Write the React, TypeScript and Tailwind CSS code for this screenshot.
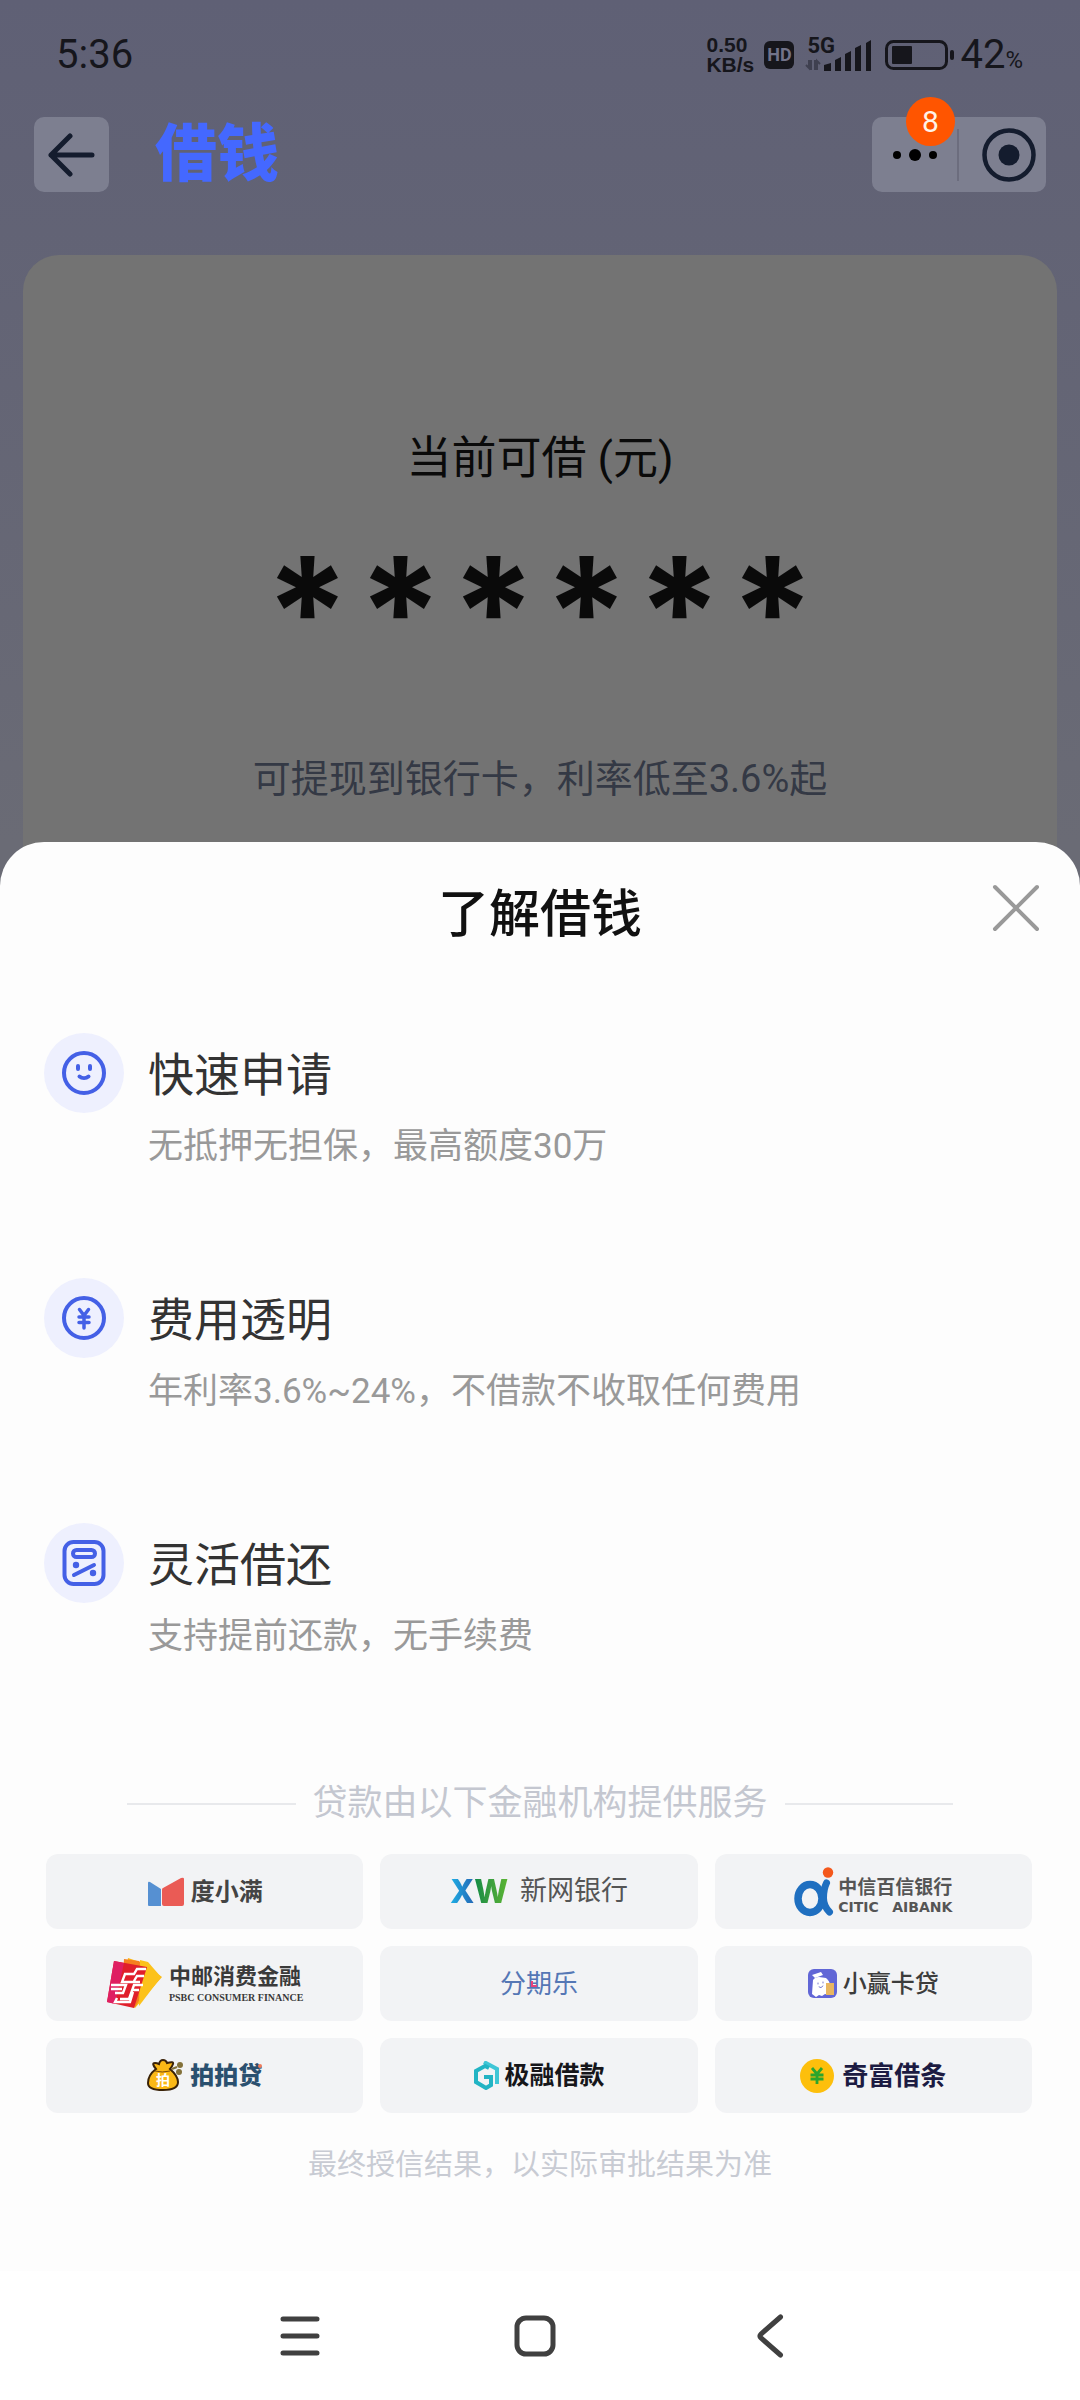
import React from 'react';
import clsx from 'clsx';

interface Feature {
    title: string;
    description: string;
    icon: React.ReactNode;
}

function SmileIcon() {
    return (
        <svg width="48" height="48" viewBox="0 0 48 48" fill="none" stroke="#4460e6" strokeLinecap="round">
            <circle cx="24" cy="24" r="20" strokeWidth="4" />
            <path d="M18 17v3M30 17v3" strokeWidth="4" />
            <path d="M19.5 27.5c2.500 2 6.500 2 9 0" strokeWidth="4" />
        </svg>
    );
}

function YuanIcon() {
    return (
        <svg width="48" height="48" viewBox="0 0 48 48" fill="none" stroke="#4460e6" strokeLinecap="round">
            <circle cx="24" cy="24" r="20" strokeWidth="4" />
            <path d="M19.500 15.500l4.500 6 4.500-6M24 22v12M19 23h10M19 28.500h10" strokeWidth="3.500" strokeLinejoin="round" />
        </svg>
    );
}

function BillIcon() {
    return (
        <svg width="48" height="48" viewBox="0 0 48 48" fill="none" stroke="#4460e6" strokeLinecap="round">
            <rect x="4.500" y="3" width="39" height="42" rx="9" strokeWidth="4" />
            <rect x="13" y="11" width="22" height="7" rx="3.500" strokeWidth="4" />
            <path d="M14 36l20-10" strokeWidth="4" />
            <circle cx="16" cy="26" r="3.200" fill="#4460e6" stroke="none" />
            <circle cx="33" cy="34" r="3.200" fill="#4460e6" stroke="none" />
        </svg>
    );
}

const features: Feature[] = [
    { title: '快速申请', description: '无抵押无担保，最高额度30万', icon: <SmileIcon /> },
    { title: '费用透明', description: '年利率3.6%~24%，不借款不收取任何费用', icon: <YuanIcon /> },
    { title: '灵活借还', description: '支持提前还款，无手续费', icon: <BillIcon /> },
];

function StatusBar() {
    return (
        <div className="flex h-[109px] items-center justify-between pr-[57px] pl-14 text-[#16161c]">
            <span className="text-[40px] leading-none">5:36</span>

            <div className="flex items-center">
                <div className="flex w-[58px] flex-col font-['Liberation_Sans'] text-[21px] leading-[20px] font-bold">
                    <span>0.50</span>
                    <span>KB/s</span>
                </div>
                <span className="flex h-7 w-[30px] items-center justify-center rounded-md bg-[#16161c] text-lg font-bold text-[#72738a]">
                    HD
                </span>
                <div className="relative ml-2.5 h-9 w-[68px]">
                    <span className="absolute top-0 left-[3px] text-[22px] leading-[18px] font-bold">5G</span>
                    <svg className="h-full w-full" viewBox="0 0 68 36">
                        <path d="M5 23v8l-3-3M7 23v10M13 33v-9l3 3M11 33V23" fill="none" stroke="#3f4050" strokeWidth="2" />
                        <g fill="#16161c">
                            <path d="M20 28l7-2v8h-7zM31 23l6-3v14h-6zM41 17l6-3v20h-6zM51 11l6-3v26h-6zM62 6l5-3v31h-5z" />
                        </g>
                    </svg>
                </div>
                <svg className="ml-3" width="72" height="32" viewBox="0 0 72 32">
                    <rect x="2.500" y="2.500" width="60" height="27" rx="7" fill="none" stroke="#16161c" strokeWidth="3" />
                    <rect x="8" y="7" width="20" height="18" rx="1" fill="#16161c" />
                    <rect x="66" y="11" width="4" height="10" rx="2" fill="#16161c" />
                </svg>
                <span className="ml-1 flex items-baseline text-[40px] leading-none">
                    42
                    <span className="text-2xl leading-none">%</span>
                </span>
            </div>
        </div>
    );
}

function PageHeader() {
    return (
        <header className="flex items-center justify-between px-[34px] pt-2">
            <div className="flex items-center gap-[46px]">
                <button type="button" aria-label="返回" className="flex size-[75px] items-center justify-center rounded-[10px] bg-[#7d7f90]">
                    <svg width="48" height="44" viewBox="0 0 48 44" fill="none" stroke="#141c2e" strokeWidth="5" strokeLinecap="round" strokeLinejoin="round">
                        <path d="M22 3L3 22l19 19M3 22h41" />
                    </svg>
                </button>
                <h1 className="text-[62px] leading-[75px] font-black text-[#4468ff]">借钱</h1>
            </div>

            <div className="relative flex h-[75px] w-[174px] items-center rounded-[10px] bg-[#7d7f90]">
                <button type="button" aria-label="更多" className="flex h-full w-[85px] items-center justify-center">
                    <svg width="48" height="14" viewBox="0 0 48 14">
                        <circle cx="6" cy="7" r="4" />
                        <circle cx="24" cy="7" r="6" />
                        <circle cx="42" cy="7" r="4" />
                    </svg>
                </button>
                <span className="h-[52px] w-0.5 bg-[#6c6d7e]" />
                <button type="button" aria-label="关闭小程序" className="flex h-full flex-1 items-center justify-center pl-3">
                    <svg width="54" height="54" viewBox="0 0 54 54">
                        <circle cx="27" cy="27" r="24.500" fill="none" stroke="#141c2e" strokeWidth="4.500" />
                        <circle cx="27" cy="27" r="10.500" fill="#141c2e" />
                    </svg>
                </button>
                <span className="absolute -top-5 left-[34px] flex size-[49px] items-center justify-center rounded-full bg-[#ff5500] text-[30px] leading-none text-[#fff3e8]">
                    8
                </span>
            </div>
        </header>
    );
}

function BalanceCard() {
    return (
        <section className="mx-[23px] mt-[63px] flex flex-col items-center rounded-t-[36px] bg-[#737373] pt-[174px] pb-[79px]">
            <h2 className="text-[45px] leading-[60px] text-[#0a0a0a]">当前可借 (元)</h2>
            <p className="mt-[47px] flex h-20 text-[#0a0a0a]">
                {Array.from({ length: 6 }, (_, i) => (
                    <span key={i} className="w-[93px] text-center font-[Inter] text-[152px] leading-[152px] font-bold">
                        *
                    </span>
                ))}
            </p>
            <p className="mt-[135px] text-[38px] leading-[56px] text-[#343945]">可提现到银行卡，利率低至3.6%起</p>
        </section>
    );
}

function FeatureItem({ title, description, icon }: Feature) {
    return (
        <li className="flex gap-6">
            <span className="flex size-20 shrink-0 items-center justify-center rounded-full bg-[#eef0fe]">{icon}</span>
            <div>
                <h3 className="text-[46px] leading-[84px] text-[#333]">{title}</h3>
                <p className="mt-1.5 text-[35px] leading-[48px] text-[#999]">{description}</p>
            </div>
        </li>
    );
}

function Partner({ className, children }: { className?: string; children: React.ReactNode }) {
    return (
        <li className={clsx('flex h-[75px] items-center justify-center rounded-xl bg-[#f2f3f5] leading-none whitespace-nowrap', className)}>
            {children}
        </li>
    );
}

function Partners() {
    return (
        <ul className="mt-[26px] grid grid-cols-3 gap-[17px] pr-12 pl-[46px]">
            <Partner className="gap-[7px] text-2xl font-bold text-[#444]">
                <svg width="37" height="29" viewBox="0 0 37 29">
                    <path d="M1 6q0-2 2-1l11 7v17H2q-1 0-1-1z" fill="#5690d2" />
                    <path d="M15 13q0-2 1-2L34 1q3-1 3 1v25q0 2-2 2H17q-2 0-2-2z" fill="#ea5b55" />
                </svg>
                度小满
            </Partner>

            <Partner className="gap-3 text-[27px] text-[#555]">
                <span className="font-[Inter] text-[32px] font-extrabold">
                    <span className="bg-linear-to-r from-[#1db0e6] to-[#2467b5] bg-clip-text text-transparent">X</span>
                    <span className="bg-linear-to-r from-[#0b8a45] to-[#5bb531] bg-clip-text text-transparent">W</span>
                </span>
                新网银行
            </Partner>

            <Partner className="gap-1 text-[#555]">
                <svg width="40" height="50" viewBox="0 0 40 50" fill="none">
                    <ellipse cx="16" cy="31.500" rx="12" ry="14" stroke="#1f6fc0" strokeWidth="7.500" />
                    <path d="M32.500 16q-3 6-3 15 0 8 6 14" stroke="#1f6fc0" strokeWidth="7" strokeLinecap="round" />
                    <circle cx="34" cy="5.500" r="5.200" fill="#f4581c" />
                </svg>
                <span className="flex flex-col gap-1 pt-2">
                    <span className="text-[19px] leading-[19px] font-bold">中信百信银行</span>
                    <span className="flex justify-between font-['DejaVu_Sans'] text-[14px] leading-3 font-bold">
                        <span>CITIC</span>
                        <span>AIBANK</span>
                    </span>
                </span>
            </Partner>

            <Partner className="gap-[7px] text-[#3a3a3a]">
                <svg width="56" height="51" viewBox="0 0 56 51">
                    <path d="M22 0l15 5 19 14-27 31-14-8z" fill="#fdb813" />
                    <path d="M18 1l15 2 14 17-18 29-14-6z" fill="#f57f1f" />
                    <path d="M34 2l8 2 13 15-22 29z" fill="#fcc21b" />
                    <path d="M8 3L41 9 28 50 1 44z" fill="#e01f2b" />
                    <path d="M8 3l10 2L9 46l-8-2z" fill="#df1f62" />
                    <g fill="none" stroke="#fff" strokeWidth="2.400">
                        <path d="M40 11h-9l-3 5h-9l-3 8h18M38 18h-7l-3 5" />
                        <path d="M5 27h15l-3 8H9M5 31h11M37 27h-9l-5 14h-9M33 32h-7M11 40l-2 4h15l3-10" />
                    </g>
                </svg>
                <span className="flex flex-col gap-1">
                    <span className="text-[22px] leading-[24px] font-bold">中邮消费金融</span>
                    <span className="font-['Liberation_Serif'] text-[10px] leading-[9px] font-bold">PSBC CONSUMER FINANCE</span>
                </span>
            </Partner>

            <Partner className="text-[26px] text-[#5577b5]">
                <span className="relative">
                    分期乐
                    <svg className="absolute top-2.5 left-[31px]" width="7" height="7" viewBox="0 0 7 7" fill="none" stroke="#e8447a" strokeWidth="2">
                        <path d="M1 0v5h5" />
                    </svg>
                </span>
            </Partner>

            <Partner className="gap-1.5 text-2xl font-medium text-[#3c3c3c]">
                <svg width="29" height="29" viewBox="0 0 29 29">
                    <rect width="29" height="29" rx="6" fill="#6166d6" />
                    <path d="M4 6l9-3 2 3-8 3z" fill="#fff" />
                    <path d="M5 11q2-3 6-3l7 1q4 3 4 8v9l-5-1-3 2-3-1-3 2-4-3z" fill="#fff" />
                    <path d="M10 14v1M15 13v1M11 18q2 2 4-1" fill="none" stroke="#777bd0" strokeLinecap="round" />
                    <rect x="18" y="14" width="8" height="12" fill="#e8b660" />
                </svg>
                小赢卡贷
            </Partner>

            <Partner className="gap-1.5 text-2xl font-black text-[#2a506f]">
                <svg width="37" height="33" viewBox="0 0 37 33">
                    <path d="M9 10Q4 4 8 4q2 0 4 1 1-4 4-4t4 3q7-2 6 1-1 3-3 5 8 7 8 13 0 8-15 8T1 24q0-8 8-14z" fill="#fbb816" stroke="#3a2208" strokeWidth="2" />
                    <path d="M8 12q7 2 15 0" fill="none" stroke="#7c4a09" />
                    <circle cx="33" cy="6" r="3" fill="#83713a" />
                    <circle cx="32" cy="13" r="3" fill="#83713a" />
                    <path d="M25 10l5-2" stroke="#83713a" strokeWidth="2" />
                    <text x="16" y="26" textAnchor="middle" fontSize="14" fontWeight="700" fill="#fff">拍</text>
                </svg>
                <span className="relative">
                    拍拍贷
                    <span className="absolute top-0 right-0 size-1 rounded-full bg-[#ef7b5a]" />
                </span>
            </Partner>

            <Partner className="gap-1 text-[25px] font-bold text-[#16161a]">
                <svg width="27" height="29" viewBox="0 0 27 29" fill="none" strokeWidth="4">
                    <path d="M11 1l13 7v15" stroke="#3fc6d6" />
                    <path d="M16 7l-4-2-9 5v11l10 6 5-3v-8h-7" stroke="#22b4c4" />
                </svg>
                极融借款
            </Partner>

            <Partner className="gap-2 text-[26px] font-bold text-[#1c1b42]">
                <svg width="34" height="34" viewBox="0 0 34 34">
                    <circle cx="17" cy="17" r="17" fill="#fdbf0c" />
                    <path d="M12 9l5 6 5-6M10.500 16h13M10.500 20h13M17 15v10" fill="none" stroke="#2ca52c" strokeWidth="2.800" />
                </svg>
                奇富借条
            </Partner>
        </ul>
    );
}

function LoanInfoSheet() {
    return (
        <section role="dialog" aria-label="了解借钱" className="relative -mt-11 rounded-t-[44px] bg-[#fdfdfd] pb-[86px]">
            <h2 className="text-center text-[51px] leading-[146px] font-medium text-[#111]">了解借钱</h2>
            <button type="button" aria-label="关闭" className="absolute top-[42px] right-[39px]">
                <svg width="50" height="48" viewBox="0 0 50 48" fill="none" stroke="#999" strokeWidth="4" strokeLinecap="round">
                    <path d="M4 3l42 42M46 3L4 45" />
                </svg>
            </button>

            <ul className="mt-[45px] flex flex-col gap-[107px] px-11">
                {features.map((feature) => (
                    <FeatureItem key={feature.title} {...feature} />
                ))}
            </ul>

            <div className="mx-[127px] mt-[119px] flex items-center gap-[17px] text-[#c4c7d0]">
                <span className="h-0.5 flex-1 bg-[#e8e9ec]" />
                <h3 className="text-[35px] leading-[48px]">贷款由以下金融机构提供服务</h3>
                <span className="h-0.5 flex-1 bg-[#e8e9ec]" />
            </div>
            <Partners />

            <p className="mt-8 text-center text-[29px] leading-10 text-[#c8cbd3]">
                最终授信结果，以实际审批结果为准
            </p>
        </section>
    );
}

function NavigationBar() {
    return (
        <nav className="grid h-[130px] grid-cols-3 bg-white pr-[193px] pl-[182px]">
            <button type="button" aria-label="最近任务" className="flex items-center justify-center">
                <svg width="44" height="44" viewBox="0 0 44 44" stroke="#404040" strokeWidth="5" strokeLinecap="round">
                    <path d="M5 5h34M5 22h34M5 39h34" />
                </svg>
            </button>
            <button type="button" aria-label="主屏幕" className="flex items-center justify-center">
                <svg width="44" height="44" viewBox="0 0 44 44" fill="none" stroke="#404040" strokeWidth="5">
                    <rect x="4" y="4" width="36" height="36" rx="9" />
                </svg>
            </button>
            <button type="button" aria-label="返回上一页" className="flex items-center justify-center">
                <svg width="28" height="44" viewBox="0 0 28 44" fill="none" stroke="#404040" strokeWidth="5" strokeLinecap="round">
                    <path d="M24.500 3L5 20q-2 2 0 4l19.500 17" />
                </svg>
            </button>
        </nav>
    );
}

export default function App() {
    return (
        <div className="min-h-screen bg-linear-to-b from-[#5f6075] via-[#6a6b75] via-35% to-[#6b6d78] font-[Roboto,'Noto_Sans_CJK_SC',sans-serif]">
            <StatusBar />
            <PageHeader />
            <BalanceCard />
            <LoanInfoSheet />
            <NavigationBar />
        </div>
    );
}
